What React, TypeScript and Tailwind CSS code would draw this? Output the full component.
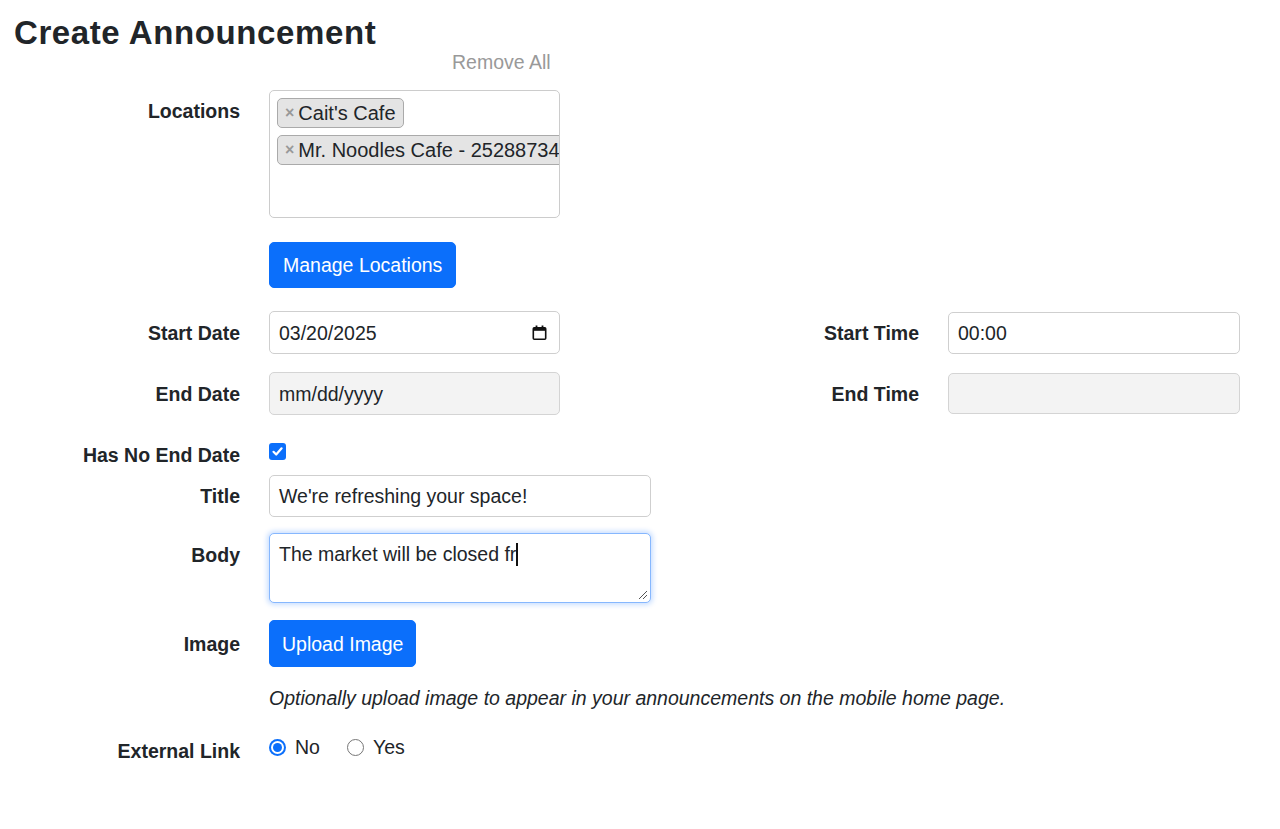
import React from 'react';

const font = { fontFamily: '"Liberation Sans", Arial, sans-serif' };

const Label: React.FC<{ children: React.ReactNode; className?: string }> = ({ children, className = '' }) => (
  <div className={`w-[226px] shrink-0 text-right font-bold text-[19.5px] leading-[24px] text-[#212529] ${className}`}>
    {children}
  </div>
);

const Tag: React.FC<{ text: string }> = ({ text }) => (
  <div className="inline-flex shrink-0 items-center whitespace-nowrap h-[30px] rounded-[5px] border border-[#aaaaaa] bg-[#e4e4e4] pl-[7px] pr-[7px]">
    <span className="text-[16px] font-bold text-[#999999] leading-[28px] mr-[4px]">×</span>
    <span className="text-[20px] leading-[28px] text-[#212529]">{text}</span>
  </div>
);

const CalendarIcon = () => (
  <svg width="15" height="15" viewBox="0 0 15 15" className="shrink-0">
    <rect x="1.3" y="2.8" width="12.4" height="11.4" rx="1" fill="none" stroke="#111" strokeWidth="1.6" />
    <rect x="1.3" y="2.8" width="12.4" height="3" fill="#111" />
    <rect x="3.6" y="0.5" width="1.8" height="3" fill="#111" />
    <rect x="9.6" y="0.5" width="1.8" height="3" fill="#111" />
  </svg>
);

const Radio: React.FC<{ checked?: boolean; label: string }> = ({ checked, label }) => (
  <div className="flex items-center">
    {checked ? (
      <span className="flex items-center justify-center w-[17px] h-[17px] rounded-full bg-[#0b6ffb]">
        <span className="w-[13px] h-[13px] rounded-full bg-white flex items-center justify-center">
          <span className="w-[9px] h-[9px] rounded-full bg-[#0b6ffb]" />
        </span>
      </span>
    ) : (
      <span className="w-[17px] h-[17px] rounded-full border border-[#767676] bg-white" />
    )}
    <span className="ml-[9px] text-[19.5px] leading-[24px] text-[#212529]">{label}</span>
  </div>
);

export default function App() {
  return (
    <div className="min-h-[829px] bg-white px-[14px] pb-10 text-[#212529]" style={font}>
      <h3 className="pt-[16px] text-[33px] leading-[34px] font-bold tracking-[0.6px] text-[#212529]">
        Create Announcement
      </h3>
      <div className="ml-[438px] text-[19.5px] leading-[24px] text-[#999999]">Remove All</div>

      {/* Locations */}
      <div className="flex items-start mt-[16px]">
        <Label className="pt-[9px]">Locations</Label>
        <div className="ml-[29px] w-[291px] h-[128px] rounded-[5px] border border-[#cccccc] bg-white overflow-hidden pt-[7px] pl-[7px] flex flex-col items-start gap-[7px]">
          <Tag text="Cait's Cafe" />
          <Tag text="Mr. Noodles Cafe - 25288734" />
        </div>
      </div>

      <div className="ml-[255px] mt-[24px]">
        <button className="h-[46px] px-[13px] rounded-[5px] border border-[#0b6ffb] bg-[#0b6ffb] text-white text-[19.5px] leading-[28px]">
          Manage Locations
        </button>
      </div>

      {/* Start date / time */}
      <div className="flex items-center mt-[23px]">
        <Label>Start Date</Label>
        <div className="ml-[29px] w-[291px] h-[43px] rounded-[5px] border border-[#cfcfcf] bg-white flex items-center justify-between pl-[9px] pr-[12px]">
          <span className="text-[19.5px] leading-[24px]">03/20/2025</span>
          <CalendarIcon />
        </div>
        <div className="w-[359px] text-right font-bold text-[19.5px] leading-[24px]">Start Time</div>
        <div className="ml-[29px] w-[292px] h-[42px] rounded-[5px] border border-[#cfcfcf] bg-white flex items-center pl-[9px]">
          <span className="text-[19.5px] leading-[24px]">00:00</span>
        </div>
      </div>

      {/* End date / time */}
      <div className="flex items-center mt-[18px]">
        <Label>End Date</Label>
        <div className="ml-[29px] w-[291px] h-[43px] rounded-[5px] border border-[#d4d4d4] bg-[#f3f3f3] flex items-center pl-[9px]">
          <span className="text-[19.5px] leading-[24px]">mm/dd/yyyy</span>
        </div>
        <div className="w-[359px] text-right font-bold text-[19.5px] leading-[24px]">End Time</div>
        <div className="ml-[29px] w-[292px] h-[41px] rounded-[5px] border border-[#d4d4d4] bg-[#f3f3f3]" />
      </div>

      {/* Has no end date */}
      <div className="flex items-start mt-[28px]">
        <Label>Has No End Date</Label>
        <div className="ml-[29px] w-[17px] h-[17px] rounded-[3px] bg-[#0b6ffb] flex items-center justify-center">
          <svg width="13" height="13" viewBox="0 0 13 13">
            <path d="M2.5 6.8 L5.2 9.5 L10.6 3.3" fill="none" stroke="#fff" strokeWidth="2.2" strokeLinecap="round" strokeLinejoin="round" />
          </svg>
        </div>
      </div>

      {/* Title */}
      <div className="flex items-center mt-[8px]">
        <Label>Title</Label>
        <div className="ml-[29px] w-[382px] h-[42px] rounded-[5px] border border-[#cfcfcf] bg-white flex items-center pl-[9px]">
          <span className="text-[19.5px] leading-[24px]">We're refreshing your space!</span>
        </div>
      </div>

      {/* Body */}
      <div className="flex items-start mt-[16px]">
        <Label className="pt-[10px]">Body</Label>
        <div className="ml-[29px] w-[382px] h-[70px] rounded-[5px] border border-[#86b7fe] bg-white shadow-[0_0_5px_2px_rgba(13,110,253,0.22)] flex flex-col justify-between pt-[6px] pl-[9px] pr-[2px] pb-[2px]">
          <div className="flex items-center text-[19.5px] leading-[28px]">
            <span>The market will be closed fr</span>
            <span className="w-[1.5px] h-[23px] bg-[#111]" />
          </div>
          <svg width="11" height="11" viewBox="0 0 11 11" className="self-end">
            <path d="M10 2 L2 10 M10 6 L6 10" stroke="#555" strokeWidth="1" />
          </svg>
        </div>
      </div>

      {/* Image */}
      <div className="flex items-center mt-[17px]">
        <Label>Image</Label>
        <div className="ml-[29px]">
          <button className="h-[47px] px-[12px] rounded-[5px] border border-[#0b6ffb] bg-[#0b6ffb] text-white text-[19.5px] leading-[28px]">
            Upload Image
          </button>
        </div>
      </div>

      <p className="ml-[255px] mt-[19px] italic text-[19.5px] leading-[24px] text-[#212529]">
        Optionally upload image to appear in your announcements on the mobile home page.
      </p>

      {/* External link */}
      <div className="flex items-start mt-[25px]">
        <Label className="pt-[4px]">External Link</Label>
        <div className="ml-[29px] flex items-center gap-[27px]">
          <Radio checked label="No" />
          <Radio label="Yes" />
        </div>
      </div>
    </div>
  );
}
